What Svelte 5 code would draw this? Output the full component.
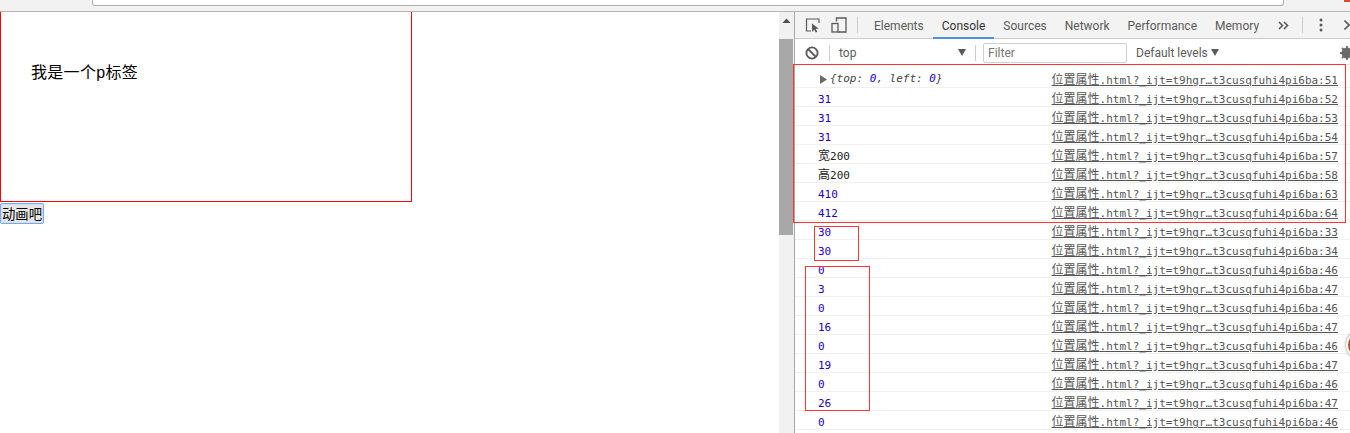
<!-- Page with a devtools console docked on the right. -->

<script>
	const LinkName = ".html?_ijt=t9hgr…t3cusqfuhi4pi6ba:"

	const Tabs = ["Elements", "Console", "Sources", "Network", "Performance", "Memory"]

	// Console rows, text + line number + kind.
	const Rows = [
		{ Text: "31", Line: 52, Kind: "num" },
		{ Text: "31", Line: 53, Kind: "num" },
		{ Text: "31", Line: 54, Kind: "num" },
		{ Cjk: "宽", Text: "200", Line: 57, Kind: "str" },
		{ Cjk: "高", Text: "200", Line: 58, Kind: "str" },
		{ Text: "410", Line: 63, Kind: "num" },
		{ Text: "412", Line: 64, Kind: "num" },
		{ Text: "30", Line: 33, Kind: "num" },
		{ Text: "30", Line: 34, Kind: "num" },
		{ Text: "0", Line: 46, Kind: "num" },
		{ Text: "3", Line: 47, Kind: "num" },
		{ Text: "0", Line: 46, Kind: "num" },
		{ Text: "16", Line: 47, Kind: "num" },
		{ Text: "0", Line: 46, Kind: "num" },
		{ Text: "19", Line: 47, Kind: "num" },
		{ Text: "0", Line: 46, Kind: "num" },
		{ Text: "26", Line: 47, Kind: "num" },
		{ Text: "0", Line: 46, Kind: "num" }
	]
</script>

<div class="Window">
	<!-- Browser address bar, mostly scrolled off. -->
	<div class="TopBar">
		<div class="Address"></div>
		<div class="RedMark"></div>
	</div>

	<div class="Main">
		<!-- The page itself. -->
		<div class="Page">
			<div class="Box">
				<p class="Para">我是一个p标签</p>
			</div>
			<button class="Animate">动画吧</button>
		</div>

		<div class="Scrollbar">
			<div class="ScrollUp">
				<svg width="9" height="5" viewBox="0 0 9 5"><path d="M0.5 5 L4.5 0.5 L8.5 5 Z" fill="#505050" /></svg>
			</div>
			<div class="Thumb"></div>
		</div>

		<!-- Devtools. -->
		<div class="Devtools">
			<div class="TabBar">
				<svg class="Inspect" width="16" height="16" viewBox="0 0 16 16">
					<path d="M6 14 H1.5 V2 H14 V6" fill="none" stroke="#5a5a5a" stroke-width="1.2" />
					<path d="M7 6.5 L7 15 L9.2 12.8 L10.8 15.6 L12.4 14.8 L10.8 12 L13.6 11.6 Z" fill="#5a5a5a" />
				</svg>
				<svg class="Device" width="16" height="16" viewBox="0 0 16 16">
					<path d="M5.5 4.5 V1 H15 V15 H7" fill="none" stroke="#5a5a5a" stroke-width="1.3" />
					<rect x="1" y="6.5" width="6" height="8.5" fill="none" stroke="#5a5a5a" stroke-width="1.3" />
				</svg>
				<div class="Sep"></div>
				<div class="Tabs">
					{#each Tabs as Tab}
						<div class="Tab" class:Active={Tab === "Console"}>{Tab}</div>
					{/each}
				</div>
				<svg class="More" width="11" height="9" viewBox="0 0 11 9">
					<path d="M1 1 L4.5 4.5 L1 8 M6 1 L9.5 4.5 L6 8" fill="none" stroke="#5a5a5a" stroke-width="1.6" />
				</svg>
				<div class="Sep SepMore"></div>
				<svg class="Dots" width="4" height="14" viewBox="0 0 4 14">
					<circle cx="2" cy="2" r="1.5" fill="#5a5a5a" />
					<circle cx="2" cy="7" r="1.5" fill="#5a5a5a" />
					<circle cx="2" cy="12" r="1.5" fill="#5a5a5a" />
				</svg>
				<svg class="Close" width="6" height="10" viewBox="0 0 6 10">
					<path d="M0.5 0.5 L5 5 L0.5 9.5" fill="none" stroke="#5a5a5a" stroke-width="1.6" />
				</svg>
			</div>

			<div class="FilterBar">
				<svg class="Clear" width="14" height="14" viewBox="0 0 14 14">
					<circle cx="7" cy="7" r="5.6" fill="none" stroke="#5a5a5a" stroke-width="1.8" />
					<path d="M3 3 L11 11" stroke="#5a5a5a" stroke-width="1.8" />
				</svg>
				<div class="Sep SepClear"></div>
				<span class="Context">top</span>
				<svg class="Caret" width="8" height="7" viewBox="0 0 8 7"><path d="M0 0 H8 L4 7 Z" fill="#5a5a5a" /></svg>
				<div class="Sep SepContext"></div>
				<div class="Filter">Filter</div>
				<span class="Levels">Default levels</span>
				<svg class="Caret" width="8" height="7" viewBox="0 0 8 7"><path d="M0 0 H8 L4 7 Z" fill="#5a5a5a" /></svg>
				<svg class="Gear" width="14" height="14" viewBox="0 0 14 14">
					<circle cx="7" cy="7" r="4" fill="none" stroke="#6a6a6a" stroke-width="3" />
					<path d="M7 0 V14 M0 7 H14 M2 2 L12 12 M12 2 L2 12" stroke="#6a6a6a" stroke-width="1.8" />
				</svg>
			</div>

			<div class="Console">
				<div class="Row RowFirst">
					<span class="Msg Object">
						<svg class="Expand" width="7" height="9" viewBox="0 0 7 9"><path d="M0 0 L7 4.5 L0 9 Z" fill="#6a6a6a" /></svg>
						<i>{"{"}top: <b>0</b>, left: <b>0</b>{"}"}</i>
					</span>
					<span class="Link"><span class="Cjk">位置属性</span>{LinkName}51</span>
				</div>
				{#each Rows as Row}
					<div class="Row">
						<span class="Msg" class:Num={Row.Kind === "num"}>{#if Row.Cjk}<span class="Cjk">{Row.Cjk}</span>{/if}{Row.Text}</span>
						<span class="Link"><span class="Cjk">位置属性</span>{LinkName}{Row.Line}</span>
					</div>
				{/each}

				<!-- Hand-drawn annotation boxes over the log. -->
				<div class="Mark MarkA"></div>
				<div class="Mark MarkB"></div>
				<div class="Mark MarkC"></div>
			</div>
		</div>
	</div>

	<div class="Bubble"></div>
</div>

<style>
	:global(body) {
		background-color: white;
		overflow: hidden;
	}

	.Window {
		position: relative;
		display: flex;
		flex-direction: column;
		width: 1350px;
		height: 433px;
		overflow: hidden;
		font-family: Roboto, "Noto Sans CJK SC", sans-serif;
	}

	/* Address bar. */
	.TopBar {
		position: relative;
		flex: none;
		height: 11px;
		background-color: #f2f2f2;
		border-bottom: 1px solid #b5b5b5;
		padding-left: 92px;
	}

	.Address {
		width: 1190px;
		height: 5px;
		background-color: white;
		border: 1px solid #b0b0b0;
		border-top: none;
		border-radius: 0 0 3px 3px;
	}

	.RedMark {
		position: absolute;
		right: 0;
		top: 0;
		width: 6px;
		height: 2px;
		background-color: #e0492e;
	}

	.Main {
		flex: 1;
		display: flex;
		min-height: 0;
	}

	/* Page. */
	.Page {
		width: 779px;
		flex: none;
	}

	.Box {
		width: 380px;
		height: 137px;
		border: 1px solid red;
		border-top: none;
		padding: 52px 0 0 30px;
		margin: 0;
	}

	.Para {
		margin: 0;
		font-family: "Liberation Sans", "Noto Sans CJK SC", sans-serif;
		font-size: 16px;
		line-height: 18px;
		letter-spacing: 0.3px;
		color: black;
	}

	.Animate {
		display: block;
		margin: 1px 0 0 0;
		padding: 0 1px;
		width: 44px;
		height: 21px;
		font-family: "Liberation Sans", "Noto Sans CJK SC", sans-serif;
		font-size: 13.33px;
		color: black;
		background-color: #e5e5e5;
		border: 1px solid #7aa7e8;
		box-shadow: 0 0 0 1px #cfdff7 inset;
		border-radius: 2px;
	}

	/* Page scrollbar. */
	.Scrollbar {
		width: 15px;
		flex: none;
		background-color: #f1f1f1;
		border-right: 1px solid #a8a8a8;
	}

	.ScrollUp {
		display: flex;
		justify-content: center;
		padding-top: 6px;
		height: 21px;
	}

	.ScrollUp svg {
		display: block;
	}

	.Thumb {
		width: 14px;
		height: 196px;
		background-color: #a8a8a8;
	}

	/* Devtools. */
	.Devtools {
		flex: 1;
		display: flex;
		flex-direction: column;
		min-width: 0;
	}

	.TabBar {
		flex: none;
		display: flex;
		align-items: center;
		height: 26px;
		background-color: #f3f3f3;
		border-bottom: 1px solid #cccccc;
		padding-left: 10px;
	}

	.Inspect {
		flex: none;
		margin-right: 10px;
	}

	.Device {
		flex: none;
		margin-right: 10px;
	}

	.Sep {
		flex: none;
		width: 1px;
		height: 16px;
		background-color: #cccccc;
	}

	.Tabs {
		display: flex;
		height: 100%;
		margin-left: 7px;
	}

	.Tab {
		display: flex;
		align-items: center;
		padding: 0 9px;
		font-size: 12px;
		color: #5a5a5a;
		box-sizing: border-box;
		height: 27px;
	}

	.Tab.Active {
		color: #333333;
		border-bottom: 2px solid #4d90e0;
		padding-top: 2px;
	}

	.More {
		flex: none;
		margin-left: 10px;
	}

	.SepMore {
		margin-left: 13px;
	}

	.Dots {
		flex: none;
		margin-left: 16px;
	}

	.Close {
		flex: none;
		margin-left: 21px;
	}

	.FilterBar {
		flex: none;
		display: flex;
		align-items: center;
		box-sizing: border-box;
		height: 26px;
		padding: 2px 0 0 10px;
		background-color: white;
		border-bottom: 1px solid #e0e0e0;
		font-size: 12px;
		color: #5a5a5a;
	}

	.Clear {
		flex: none;
	}

	.Caret {
		flex: none;
	}

	.SepClear {
		margin-left: 10px;
	}

	.Context {
		flex: none;
		margin-left: 9px;
		width: 119px;
	}

	.SepContext {
		margin-left: 9px;
	}

	.Filter {
		flex: none;
		margin-left: 7px;
		width: 138px;
		height: 18px;
		line-height: 18px;
		padding-left: 4px;
		border: 1px solid #d0d0d0;
		border-radius: 2px;
		color: #757575;
	}

	.Levels {
		flex: none;
		margin-left: 9px;
		margin-right: 3px;
		white-space: nowrap;
	}

	.Gear {
		flex: none;
		margin-left: 121px;
	}

	/* Console log. */
	.Console {
		position: relative;
		flex: 1;
		font-family: "DejaVu Sans Mono", "Noto Sans CJK SC", monospace;
		font-size: 11px;
		line-height: 16px;
		min-height: 0;
	}

	.Row {
		display: flex;
		justify-content: space-between;
		align-items: baseline;
		box-sizing: border-box;
		height: 19px;
		padding: 4px 12px 0 23px;
		border-bottom: 1px solid #f0f0f0;
		color: #222222;
	}

	.RowFirst {
		height: 23px;
		padding-top: 6px;
		padding-left: 25px;
	}

	.Cjk {
		font-size: 12px;
		line-height: 1;
	}

	.Msg.Num {
		color: #1c00cf;
	}

	.Object {
		display: flex;
		align-items: center;
		gap: 3px;
		color: #444444;
	}

	.Object b {
		font-weight: normal;
		color: #1c00cf;
	}

	.Link {
		color: #545454;
		text-decoration: underline;
	}

	/* Annotation boxes. */
	.Mark {
		position: absolute;
		border: 1px solid #ff3333;
		box-sizing: border-box;
	}

	.MarkA {
		left: -2px;
		top: -1px;
		width: 553px;
		height: 159px;
	}

	.MarkB {
		left: 19px;
		top: 161px;
		width: 45px;
		height: 35px;
	}

	.MarkC {
		left: 10px;
		top: 201px;
		width: 65px;
		height: 145px;
	}

	.Bubble {
		position: absolute;
		right: -24px;
		top: 331px;
		width: 24px;
		height: 24px;
		border: 2px solid white;
		border-radius: 50%;
		background-color: #b5561c;
		box-shadow: 0 0 3px #888888;
	}
</style>
